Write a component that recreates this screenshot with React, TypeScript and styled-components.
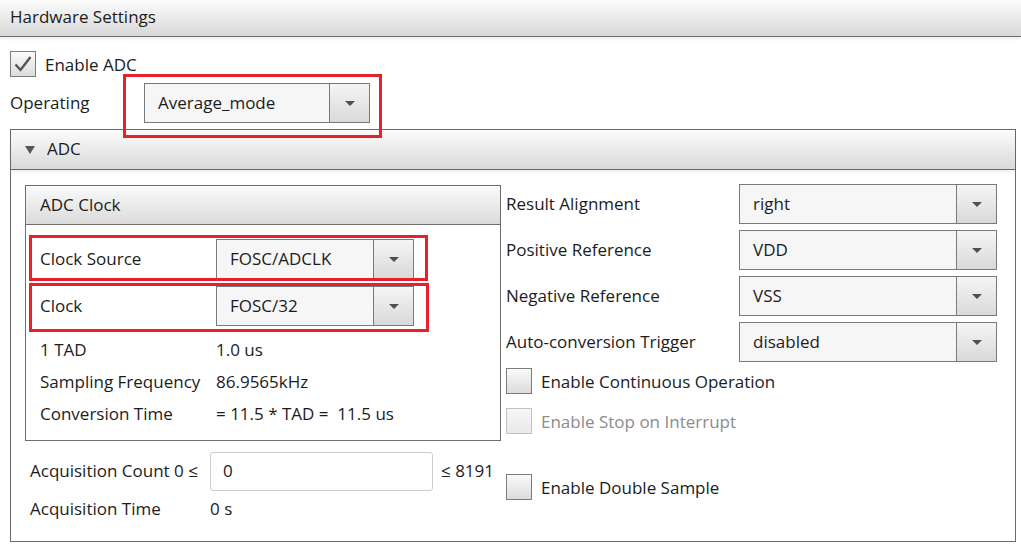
import React from 'react';
import styled, { createGlobalStyle } from 'styled-components';

const GlobalStyle = createGlobalStyle`
  html, body { margin: 0; padding: 0; background: #ffffff; }
  body {
    font-family: "Open Sans", "Noto Sans", sans-serif;
    font-size: 17px;
    color: #1c1c1c;
  }
  * { box-sizing: border-box; }
`;

const Page = styled.div`
  width: 1021px;
  height: 547px;
  overflow: hidden;
  background: #ffffff;
`;

const TitleBar = styled.div`
  height: 37px;
  display: flex;
  align-items: center;
  padding: 0 0 3px 10px;
  background: linear-gradient(#fcfcfc, #d8d8d8);
  border-bottom: 1px solid #6e6e6e;
  box-shadow: 0 2px 3px rgba(0, 0, 0, 0.08);
`;

const Content = styled.div`
  padding: 13px 5px 0 10px;
  display: flex;
  flex-direction: column;
`;

const CheckRow = styled.label<{ $disabled?: boolean; $mt?: number }>`
  display: flex;
  align-items: center;
  height: 26px;
  gap: 9px;
  margin-top: ${p => p.$mt ?? 0}px;
  color: ${p => (p.$disabled ? '#8c8c8c' : '#1c1c1c')};
  white-space: nowrap;
`;

const Box = styled.span<{ $disabled?: boolean }>`
  width: 26px;
  height: 26px;
  flex: none;
  border: 1px solid ${p => (p.$disabled ? '#c2c2c2' : '#7c7c7c')};
  background: ${p =>
    p.$disabled ? 'linear-gradient(#f7f7f7, #e9e9e9)' : 'linear-gradient(#fafafa, #dcdcdc)'};
  display: flex;
  align-items: center;
  justify-content: center;
`;

const FieldRow = styled.div<{ $mt?: number; $pl?: number }>`
  display: flex;
  align-items: center;
  align-self: flex-start;
  height: 40px;
  margin-top: ${p => p.$mt ?? 0}px;
  padding-left: ${p => p.$pl ?? 0}px;
  position: relative;
`;

const Label = styled.span<{ $w: number }>`
  width: ${p => p.$w}px;
  flex: none;
  white-space: nowrap;
  padding-bottom: 2px;
`;

const SelectBox = styled.div<{ $w: number }>`
  width: ${p => p.$w}px;
  height: 40px;
  flex: none;
  display: flex;
  border: 1px solid #7a7a7a;
  background: #f6f6f6;
`;

const SelectValue = styled.span`
  flex: 1;
  display: flex;
  align-items: center;
  padding: 0 0 2px 13px;
  white-space: nowrap;
`;

const SelectButton = styled.span`
  width: 40px;
  flex: none;
  border-left: 1px solid #7a7a7a;
  background: linear-gradient(#f5f5f5, #d9d9d9);
  display: flex;
  align-items: center;
  justify-content: center;
`;

const Arrow = styled.span`
  width: 0;
  height: 0;
  border-left: 5.5px solid transparent;
  border-right: 5.5px solid transparent;
  border-top: 5px solid #505050;
  margin-top: 1px;
`;

const RedMark = styled.span<{ $t: number; $r: number; $b: number; $l: number }>`
  position: absolute;
  top: ${p => p.$t}px;
  right: ${p => p.$r}px;
  bottom: ${p => p.$b}px;
  left: ${p => p.$l}px;
  border: 3px solid #e8202a;
  pointer-events: none;
  z-index: 2;
`;

const Section = styled.div`
  margin-top: 6px;
  width: 1006px;
  height: 413px;
  border: 1px solid #6a6a6a;
  display: flex;
  flex-direction: column;
`;

const SectionHeader = styled.div`
  height: 40px;
  flex: none;
  display: flex;
  align-items: center;
  gap: 12px;
  padding: 0 0 2px 14px;
  background: linear-gradient(#fcfcfc, #d9d9d9);
  border-bottom: 1px solid #6a6a6a;
  box-shadow: 0 2px 3px rgba(0, 0, 0, 0.07);
`;

const Caret = styled.span`
  width: 0;
  height: 0;
  border-left: 5.5px solid transparent;
  border-right: 5.5px solid transparent;
  border-top: 8px solid #555555;
  margin-top: 2px;
`;

const SectionBody = styled.div`
  padding: 14px 0 0 14px;
  display: grid;
  grid-template-columns: 476px 491px;
  column-gap: 5px;
  align-items: start;
`;

const Column = styled.div<{ $mt?: number }>`
  display: flex;
  flex-direction: column;
  margin-top: ${p => p.$mt ?? 0}px;
`;

const GroupBox = styled.div`
  height: 256px;
  border: 1px solid #6e6e6e;
  display: flex;
  flex-direction: column;
`;

const GroupHeader = styled.div`
  height: 39px;
  flex: none;
  display: flex;
  align-items: center;
  padding: 0 0 2px 14px;
  background: linear-gradient(#fbfbfb, #dadada);
  border-bottom: 1px solid #6e6e6e;
`;

const GroupBody = styled.div`
  padding: 14px 0 0 14px;
  display: flex;
  flex-direction: column;
`;

const TextRow = styled.div<{ $mt?: number; $h?: number; $pl?: number }>`
  display: flex;
  align-items: center;
  height: ${p => p.$h ?? 32}px;
  margin-top: ${p => p.$mt ?? 0}px;
  padding-left: ${p => p.$pl ?? 0}px;
  white-space: nowrap;
`;

const Value = styled.span`
  padding-bottom: 2px;
`;

const NumberInput = styled.div`
  width: 223px;
  height: 39px;
  flex: none;
  border: 1px solid #cdcdcd;
  border-radius: 3px;
  display: flex;
  align-items: center;
  padding: 0 0 2px 12px;
  background: #ffffff;
`;

const Suffix = styled.span`
  margin-left: 8px;
  padding-bottom: 2px;
  white-space: nowrap;
`;

const Check = () => (
  <svg width="20" height="18" viewBox="0 0 20 18">
    <path d="M2.5 9.5 L7.5 15 L17.5 2" fill="none" stroke="#555555" strokeWidth="2.4" />
  </svg>
);

const Select = ({ value, w }: { value: string; w: number }) => (
  <SelectBox $w={w}>
    <SelectValue>{value}</SelectValue>
    <SelectButton>
      <Arrow />
    </SelectButton>
  </SelectBox>
);

export default function App() {
  return (
    <Page>
      <GlobalStyle />
      <TitleBar>Hardware Settings</TitleBar>
      <Content>
        <CheckRow $mt={1}>
          <Box>
            <Check />
          </Box>
          Enable ADC
        </CheckRow>
        <FieldRow $mt={6}>
          <Label $w={134}>Operating</Label>
          <FieldRow>
            <Select value="Average_mode" w={226} />
            <RedMark $t={-9} $r={-12} $b={-15} $l={-21} />
          </FieldRow>
        </FieldRow>
        <Section>
          <SectionHeader>
            <Caret />
            ADC
          </SectionHeader>
          <SectionBody>
            <Column $mt={1}>
              <GroupBox>
                <GroupHeader>ADC Clock</GroupHeader>
                <GroupBody>
                  <FieldRow>
                    <Label $w={176}>Clock Source</Label>
                    <Select value="FOSC/ADCLK" w={198} />
                    <RedMark $t={-4} $r={-14} $b={-2} $l={-11} />
                  </FieldRow>
                  <FieldRow $mt={7}>
                    <Label $w={176}>Clock</Label>
                    <Select value="FOSC/32" w={198} />
                    <RedMark $t={-3} $r={-15} $b={-6} $l={-11} />
                  </FieldRow>
                  <TextRow $mt={8}>
                    <Label $w={176}>1 TAD</Label>
                    <Value>1.0 us</Value>
                  </TextRow>
                  <TextRow>
                    <Label $w={176}>Sampling Frequency</Label>
                    <Value>86.9565kHz</Value>
                  </TextRow>
                  <TextRow>
                    <Label $w={176}>Conversion Time</Label>
                    <Value>= 11.5 * TAD = &nbsp;11.5 us</Value>
                  </TextRow>
                </GroupBody>
              </GroupBox>
              <TextRow $mt={11} $h={39} $pl={5}>
                <Label $w={180}>Acquisition Count 0 ≤</Label>
                <NumberInput>0</NumberInput>
                <Suffix>≤ 8191</Suffix>
              </TextRow>
              <TextRow $h={36} $pl={5}>
                <Label $w={180}>Acquisition Time</Label>
                <Value>0 s</Value>
              </TextRow>
            </Column>
            <Column>
              <FieldRow>
                <Label $w={233}>Result Alignment</Label>
                <Select value="right" w={258} />
              </FieldRow>
              <FieldRow $mt={6}>
                <Label $w={233}>Positive Reference</Label>
                <Select value="VDD" w={258} />
              </FieldRow>
              <FieldRow $mt={6}>
                <Label $w={233}>Negative Reference</Label>
                <Select value="VSS" w={258} />
              </FieldRow>
              <FieldRow $mt={6}>
                <Label $w={233}>Auto-conversion Trigger</Label>
                <Select value="disabled" w={258} />
              </FieldRow>
              <CheckRow $mt={6}>
                <Box />
                Enable Continuous Operation
              </CheckRow>
              <CheckRow $mt={14} $disabled>
                <Box $disabled />
                Enable Stop on Interrupt
              </CheckRow>
              <CheckRow $mt={40}>
                <Box />
                Enable Double Sample
              </CheckRow>
            </Column>
          </SectionBody>
        </Section>
      </Content>
    </Page>
  );
}
